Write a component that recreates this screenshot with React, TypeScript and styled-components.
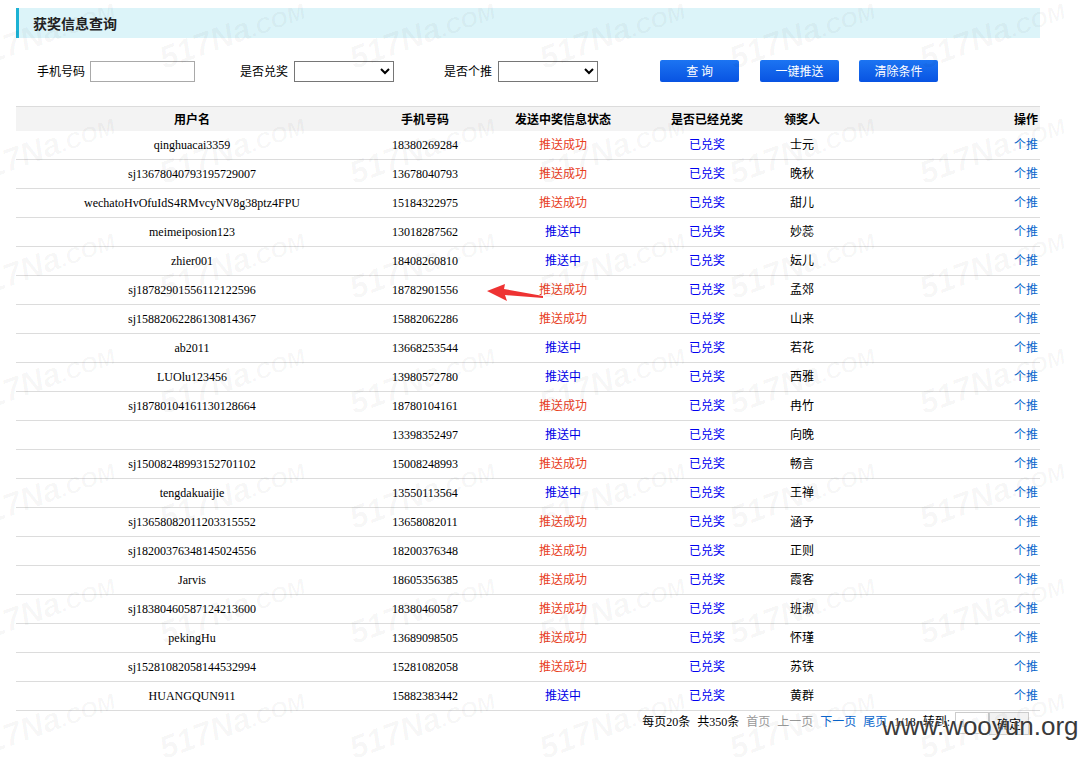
import React from "react";
import styled, { createGlobalStyle } from "styled-components";

const Global = createGlobalStyle`
  html, body { margin: 0; padding: 0; background: #fff; }
  body { font-family: "Liberation Serif", "Noto Sans CJK SC", serif; color: #000; }
`;

const Page = styled.div`
  position: relative;
  width: 1088px;
  height: 758px;
  overflow: hidden;
  padding: 8px 48px 0 16px;
  box-sizing: border-box;
`;

const TitleBar = styled.div`
  height: 30px;
  background: #dcf4f9;
  border-left: 3px solid #1cb2d4;
  padding-left: 14px;
  display: flex;
  align-items: center;
  font-family: "Noto Sans CJK SC", sans-serif;
  font-size: 14px;
  font-weight: bold;
  color: #222;
`;

const FilterRow = styled.div`
  margin-top: 22px;
  height: 22px;
  display: flex;
  align-items: center;
  padding-left: 21px;
`;

const Label = styled.span<{ $gap: number }>`
  font-family: "Noto Sans CJK SC", sans-serif;
  font-size: 12px;
  line-height: 22px;
  color: #000;
  margin-left: ${(p) => p.$gap}px;
  margin-right: 6px;
`;

const TextInput = styled.input`
  width: 105px;
  height: 21px;
  box-sizing: border-box;
  border: 1px solid #a9a9a9;
  padding: 0 3px;
  margin: 0 0 0 -1px;
  outline: none;
`;

const Select = styled.select`
  width: 100px;
  height: 21px;
  box-sizing: border-box;
  border: 1px solid #767676;
  border-radius: 0;
  background: #fff;
  margin: 0;
  font-size: 12px;
`;

const Btn = styled.button<{ $gap: number }>`
  width: 79px;
  height: 22px;
  margin: 0 0 0 ${(p) => p.$gap}px;
  padding: 0;
  border: none;
  border-radius: 2px;
  background: linear-gradient(#1c74f2, #0853e2);
  color: #fff;
  font-family: "Noto Sans CJK SC", sans-serif;
  font-size: 12px;
  line-height: 22px;
  white-space: pre;
`;

const Table = styled.table`
  margin-top: 24px;
  width: 1024px;
  border-collapse: collapse;
  table-layout: fixed;
`;

const HeadRow = styled.tr`
  background: #f3f3f3;
  border-top: 1px solid #dcdcdc;
`;

const Th = styled.th<{ $align?: string }>`
  height: 24px;
  padding: 0 2px 0 0;
  font-family: "Noto Sans CJK SC", sans-serif;
  font-size: 12px;
  font-weight: bold;
  text-align: ${(p) => p.$align || "center"};
  line-height: 24px;
  color: #000;
`;

const Row = styled.tr`
  border-bottom: 1px solid #dcdcdc;
`;

const Td = styled.td<{ $align?: string; $color?: string }>`
  height: 28px;
  padding: 0 2px 0 0;
  font-size: 12px;
  line-height: 28px;
  text-align: ${(p) => p.$align || "center"};
  color: ${(p) => p.$color || "#000"};
  white-space: nowrap;
  overflow: hidden;
`;

const Pager = styled.div`
  display: flex;
  justify-content: flex-end;
  align-items: flex-start;
  padding-right: 11px;
  font-size: 12px;
  line-height: 22px;
  height: 24px;
`;

const PItem = styled.span<{ $color?: string }>`
  margin-left: 7px;
  color: ${(p) => p.$color || "#000"};
`;

const PageInput = styled.input`
  width: 34px;
  height: 22px;
  box-sizing: border-box;
  margin: 1px 0 0 5px;
  border: 1px solid #ccc;
  color: #bbb;
  font-size: 12px;
  padding: 0 4px;
  font-family: "Liberation Serif", serif;
`;

const PageBtn = styled.button`
  width: 40px;
  height: 23px;
  margin: 1px 0 0 0;
  border: 1px solid #ccc;
  background: #f2f2f2;
  font-family: "Noto Sans CJK SC", sans-serif;
  font-size: 12px;
  padding: 0;
  color: #000;
`;

const Overlay = styled.div`
  position: absolute;
  inset: 0;
  pointer-events: none;
  z-index: 5;
`;

const Wm = styled.div`
  position: absolute;
  transform: rotate(-20deg);
  transform-origin: left bottom;
  font-family: "Liberation Sans", sans-serif;
  font-weight: bold;
  font-style: italic;
  color: rgba(0, 0, 0, 0.035);
  white-space: nowrap;
`;

const WmBig = styled.span`
  font-size: 32px;
`;

const WmSmall = styled.span`
  font-size: 22px;
`;

const Wooyun = styled.div`
  position: absolute;
  left: 882px;
  top: 713px;
  font-family: "Liberation Sans", sans-serif;
  font-size: 26px;
  line-height: 26px;
  color: #3a3a3a;
  text-shadow: 0 0 2px #fff;
  z-index: 6;
`;

const Arrow = styled.svg`
  position: absolute;
  left: 484px;
  top: 281px;
  z-index: 6;
`;

type R = [string, string, boolean, string];
const rows: R[] = [
  ["qinghuacai3359", "18380269284", true, "士元"],
  ["sj13678040793195729007", "13678040793", true, "晚秋"],
  ["wechatoHvOfuIdS4RMvcyNV8g38ptz4FPU", "15184322975", true, "甜儿"],
  ["meimeiposion123", "13018287562", false, "妙蕊"],
  ["zhier001", "18408260810", false, "妘儿"],
  ["sj18782901556112122596", "18782901556", true, "孟郊"],
  ["sj15882062286130814367", "15882062286", true, "山来"],
  ["ab2011", "13668253544", false, "若花"],
  ["LUOlu123456", "13980572780", false, "西雅"],
  ["sj18780104161130128664", "18780104161", true, "冉竹"],
  ["", "13398352497", false, "向晚"],
  ["sj15008248993152701102", "15008248993", true, "畅言"],
  ["tengdakuaijie", "13550113564", false, "王禅"],
  ["sj13658082011203315552", "13658082011", true, "涵予"],
  ["sj18200376348145024556", "18200376348", true, "正则"],
  ["Jarvis", "18605356385", true, "霞客"],
  ["sj18380460587124213600", "18380460587", true, "班淑"],
  ["pekingHu", "13689098505", true, "怀瑾"],
  ["sj15281082058144532994", "15281082058", true, "苏铁"],
  ["HUANGQUN911", "15882383442", false, "黄群"],
];

const wmCols = [-23, 167, 357, 547, 737, 927];
const wmRows = [40, 155, 270, 385, 500, 615, 730];

export default function App() {
  return (
    <Page>
      <Global />
      <TitleBar>获奖信息查询</TitleBar>
      <FilterRow>
        <Label $gap={0}>手机号码</Label>
        <TextInput />
        <Label $gap={45}>是否兑奖</Label>
        <Select>
          <option></option>
        </Select>
        <Label $gap={50}>是否个推</Label>
        <Select>
          <option></option>
        </Select>
        <Btn $gap={62}>{"查 询"}</Btn>
        <Btn $gap={21}>一键推送</Btn>
        <Btn $gap={20}>清除条件</Btn>
      </FilterRow>
      <Table>
        <colgroup>
          <col style={{ width: 354 }} />
          <col style={{ width: 112 }} />
          <col style={{ width: 164 }} />
          <col style={{ width: 124 }} />
          <col style={{ width: 66 }} />
          <col style={{ width: 204 }} />
        </colgroup>
        <thead>
          <HeadRow>
            <Th>用户名</Th>
            <Th>手机号码</Th>
            <Th>发送中奖信息状态</Th>
            <Th>是否已经兑奖</Th>
            <Th>领奖人</Th>
            <Th $align="right">操作</Th>
          </HeadRow>
        </thead>
        <tbody>
          {rows.map((r, i) => (
            <Row key={i}>
              <Td>{r[0]}</Td>
              <Td>{r[1]}</Td>
              <Td $color={r[2] ? "#e8401e" : "#0000e6"}>{r[2] ? "推送成功" : "推送中"}</Td>
              <Td $color="#0000f0">已兑奖</Td>
              <Td>{r[3]}</Td>
              <Td $align="right" $color="#0a66cc">个推</Td>
            </Row>
          ))}
        </tbody>
      </Table>
      <Pager>
        <PItem>每页20条</PItem>
        <PItem>共350条</PItem>
        <PItem $color="#999">首页</PItem>
        <PItem $color="#999">上一页</PItem>
        <PItem $color="#0a66cc">下一页</PItem>
        <PItem $color="#0a66cc">尾页</PItem>
        <PItem>1/18</PItem>
        <PItem>转到:</PItem>
        <PageInput defaultValue="1" />
        <PageBtn>确定</PageBtn>
      </Pager>
      <Overlay>
        {wmRows.map((y) =>
          wmCols.map((x) => (
            <Wm key={`${x}-${y}`} style={{ left: x, top: y }}>
              <WmBig>517Na</WmBig>
              <WmSmall>.COM</WmSmall>
            </Wm>
          ))
        )}
      </Overlay>
      <Arrow width="62" height="22" viewBox="0 0 62 22">
        <polygon points="3,10 21,3 20,8 59,15 59,17 21,14 23,20" fill="#ee3333" />
      </Arrow>
      <Wooyun>www.wooyun.org</Wooyun>
    </Page>
  );
}
